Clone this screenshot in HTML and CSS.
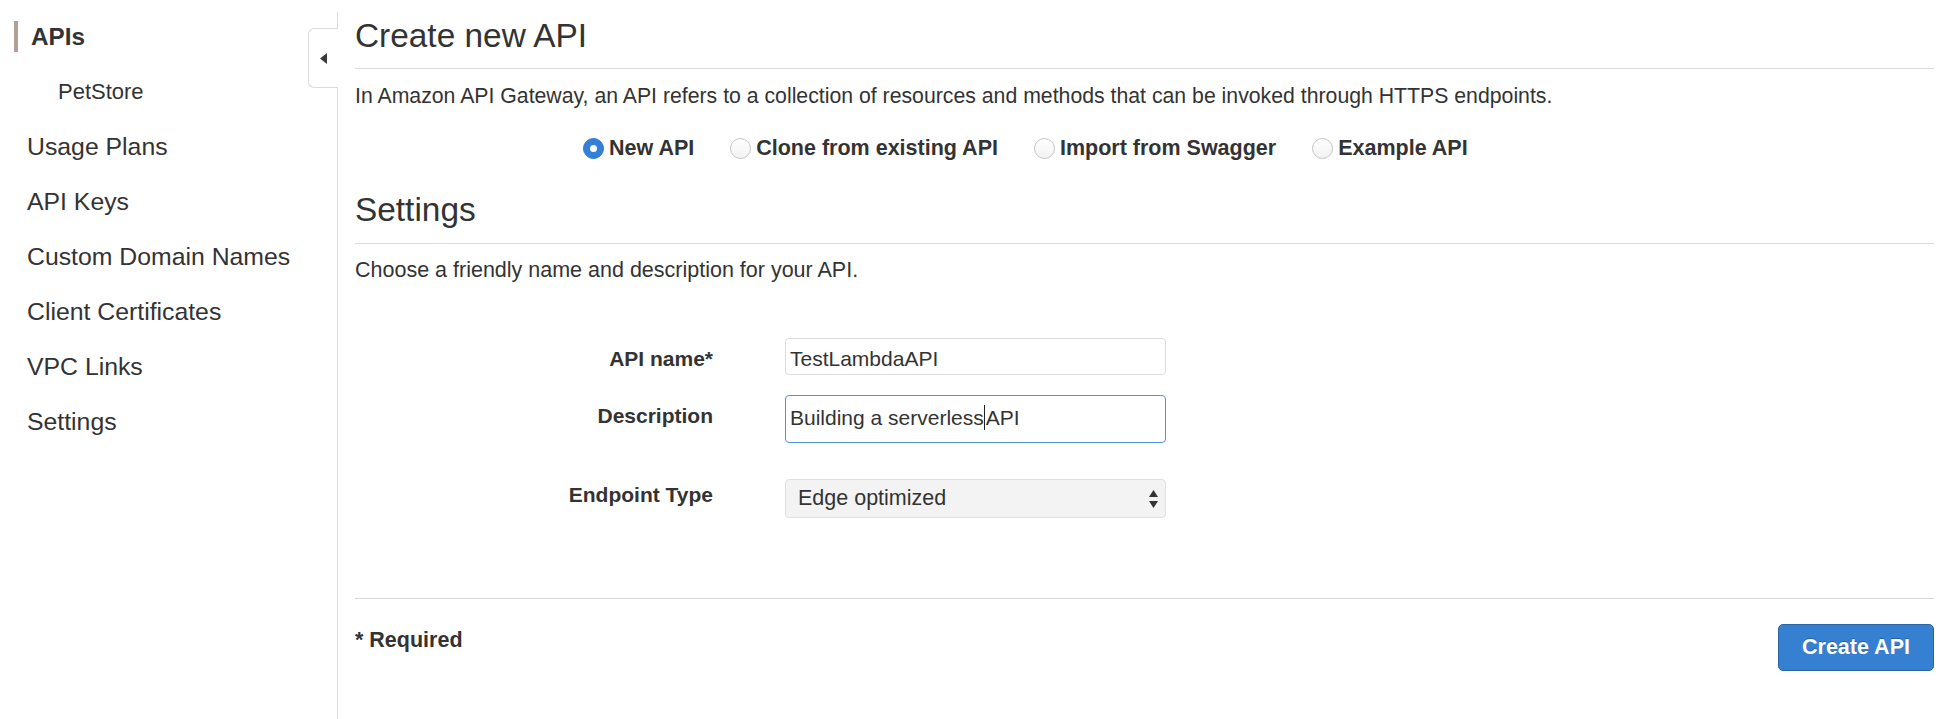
FILE: index.html
```html
<!DOCTYPE html>
<html lang="en">
<head>
<meta charset="utf-8">
<title>Create new API</title>
<link rel="stylesheet" href="styles.css">
</head>
<body>
<div class="app">
  <aside class="sidebar">
    <button class="collapse" type="button" aria-label="Collapse navigation">
      <svg width="7" height="11" viewBox="0 0 7 11"><polygon points="7,0 0,5.5 7,11" fill="#3a3a3a"/></svg>
    </button>
    <nav class="nav">
      <a class="nav-item active">APIs</a>
      <a class="nav-sub">PetStore</a>
      <a class="nav-item">Usage Plans</a>
      <a class="nav-item">API Keys</a>
      <a class="nav-item">Custom Domain Names</a>
      <a class="nav-item">Client Certificates</a>
      <a class="nav-item">VPC Links</a>
      <a class="nav-item">Settings</a>
    </nav>
  </aside>
  <main class="main">
    <header class="page-head"><h1>Create new API</h1></header>
    <p class="intro">In Amazon API Gateway, an API refers to a collection of resources and methods that can be invoked through HTTPS endpoints.</p>
    <div class="choices">
      <label class="choice"><span class="radio checked"></span>New API</label>
      <label class="choice"><span class="radio"></span>Clone from existing API</label>
      <label class="choice"><span class="radio"></span>Import from Swagger</label>
      <label class="choice"><span class="radio"></span>Example API</label>
    </div>
    <header class="section-head"><h2>Settings</h2></header>
    <p class="lead">Choose a friendly name and description for your API.</p>
    <div class="form">
      <div class="row row-name">
        <div class="lbl">API name*</div>
        <div class="field">TestLambdaAPI</div>
      </div>
      <div class="row row-desc">
        <div class="lbl">Description</div>
        <div class="field focus">Building a serverless<span class="caret"></span>API</div>
      </div>
      <div class="row row-type">
        <div class="lbl">Endpoint Type</div>
        <div class="field select">Edge optimized
          <svg class="arrows" width="9" height="20" viewBox="0 0 9 20"><polygon points="4.5,1 9,8 0,8" fill="#333"/><polygon points="0,12 9,12 4.5,19" fill="#333"/></svg>
        </div>
      </div>
    </div>
    <footer class="footer">
      <span class="req">* Required</span>
      <button class="btn" type="button">Create API</button>
    </footer>
  </main>
</div>
</body>
</html>
```

FILE: styles.css
```css
* { box-sizing: border-box; }
html, body { margin: 0; padding: 0; background: #fff; }
body {
  font-family: "Liberation Sans", Arial, Helvetica, sans-serif;
  color: #333;
}
.app {
  display: flex;
  min-height: 719px;
}

/* Sidebar */
.sidebar {
  position: relative;
  flex: 0 0 338px;
  width: 338px;
  margin-top: 12px;
  border-right: 1px solid #dcdcdc;
}
.collapse {
  position: absolute;
  top: 16px;
  right: -1px;
  width: 30px;
  height: 60px;
  padding: 0 0 0 11px;
  margin: 0;
  background: #fff;
  border: 1px solid #dcdcdc;
  border-right: none;
  border-radius: 6px 0 0 6px;
  display: flex;
  align-items: center;
  cursor: pointer;
}
.collapse svg { display: block; }
.nav {
  display: flex;
  flex-direction: column;
  gap: 24px;
  padding-top: 9px;
}
.nav a {
  display: block;
  color: #333;
  text-decoration: none;
  white-space: nowrap;
}
.nav-item {
  font-size: 24.8px;
  line-height: 31px;
  padding-left: 27px;
}
.nav-item.active {
  font-weight: bold;
  font-size: 24.3px;
  margin-left: 14px;
  padding-left: 13px;
  border-left: 4px solid #b3a094;
}
.nav-sub {
  font-size: 22px;
  line-height: 31px;
  padding-left: 58px;
}

/* Main */
.main {
  flex: 1;
  padding: 0 16px 0 17px;
}
.page-head, .section-head {
  border-bottom: 1px solid #dadada;
}
.page-head { padding: 16px 0 12px; }
.section-head { margin-top: 31px; padding-bottom: 13px; }
h1, h2 {
  margin: 0;
  font-size: 33.4px;
  line-height: 40px;
  font-weight: normal;
  color: #333;
}
.intro, .lead {
  margin: 0;
  font-size: 21.5px;
  line-height: 26px;
}
.intro { margin-top: 14px; font-size: 21.25px; }
.lead { margin-top: 13px; }

.choices {
  display: flex;
  gap: 36px;
  margin: 28px 0 0 228px;
  height: 22px;
}
.choice {
  display: flex;
  align-items: center;
  gap: 5px;
  font-size: 21.5px;
  line-height: 22px;
  font-weight: bold;
  white-space: nowrap;
}
.radio {
  width: 21px;
  height: 21px;
  border-radius: 50%;
  border: 1px solid #c4c4c4;
  background: linear-gradient(#ffffff, #f2f2f2);
  flex: 0 0 21px;
  position: relative;
}
.radio.checked {
  border-color: #2c78cf;
  background: #3380d6;
}
.radio.checked::after {
  content: "";
  position: absolute;
  left: 6px;
  top: 6px;
  width: 7px;
  height: 7px;
  border-radius: 50%;
  background: #fff;
}

/* Form */
.form {
  display: flex;
  flex-direction: column;
  margin-top: 55px;
}
.row {
  display: grid;
  grid-template-columns: 358px 381px;
  column-gap: 72px;
  align-items: start;
}
.row-desc { margin-top: 20px; }
.row-type { margin-top: 36px; }
.lbl {
  text-align: right;
  font-weight: bold;
  font-size: 21px;
  line-height: 26px;
  padding-top: 8px;
}
.row-type .lbl { padding-top: 3px; }
.field {
  position: relative;
  border: 1px solid #dcdcdc;
  border-radius: 4px;
  font-size: 21px;
  line-height: 26px;
  height: 37px;
  padding: 7px 4px 2px;
  white-space: nowrap;
  background: #fff;
}
.field.focus {
  border-color: #4f93dc;
  height: 48px;
  padding-top: 9px;
}
.caret {
  display: inline-block;
  width: 1px;
  height: 25px;
  background: #222;
  vertical-align: -5px;
  margin: 0 1px 0 0;
}
.field.select {
  height: 39px;
  padding: 5px 12px 0 12px;
  font-size: 21.5px;
  background: #f3f3f3;
  border-color: #e0e0e0;
}
.arrows {
  position: absolute;
  right: 7px;
  top: 9px;
}

/* Footer */
.footer {
  margin-top: 80px;
  border-top: 1px solid #d6d6d6;
  padding-top: 25px;
  display: flex;
  justify-content: space-between;
  align-items: flex-start;
}
.req {
  margin-top: 3px;
  font-size: 21.5px;
  line-height: 26px;
  font-weight: bold;
}
.btn {
  width: 156px;
  height: 47px;
  padding: 0;
  border: 1px solid #2a63a6;
  border-radius: 5px;
  background: #3580d0;
  color: #fff;
  font-family: inherit;
  font-size: 21.5px;
  font-weight: bold;
  line-height: 45px;
  text-shadow: 0 -1px 0 rgba(0, 0, 0, 0.25);
  cursor: pointer;
}
```
